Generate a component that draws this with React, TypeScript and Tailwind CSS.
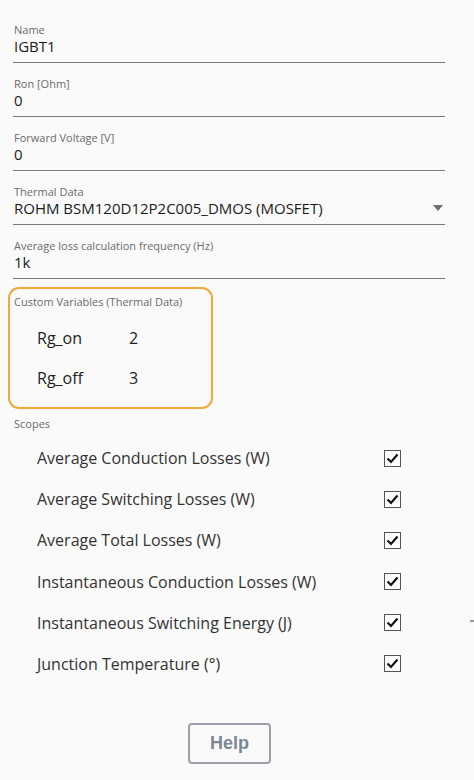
import React from "react";

const font = { fontFamily: '"Open Sans", "Noto Sans", sans-serif' };

function Field({ label, value, dropdown }: { label: string; value: string; dropdown?: boolean }) {
  return (
    <div className="ml-[13px] w-[432px] border-b border-[#7a7a7a] pb-[7px]">
      <div className="text-[11px] leading-[14px] text-[#6b6b6b] pl-[1px]">{label}</div>
      <div className="flex items-center justify-between text-[15px] leading-[18px] text-[#1a1a1a] pl-[1px]">
        <span>{value}</span>
        {dropdown && (
          <svg width="10" height="6" viewBox="0 0 10 6" className="mr-[2px]">
            <path d="M0 0 L10 0 L5 6 Z" fill="#6e6e6e" />
          </svg>
        )}
      </div>
    </div>
  );
}

function Check() {
  return (
    <div className="w-[17px] h-[17px] border border-[#555] bg-white flex items-center justify-center">
      <svg width="13" height="11" viewBox="0 0 13 11">
        <path d="M1.5 5.5 L5 9 L11.5 1.5" fill="none" stroke="#111" strokeWidth="2.2" />
      </svg>
    </div>
  );
}

const scopes = [
  "Average Conduction Losses (W)",
  "Average Switching Losses (W)",
  "Average Total Losses (W)",
  "Instantaneous Conduction Losses (W)",
  "Instantaneous Switching Energy (J)",
  "Junction Temperature (°)",
];

export default function App() {
  return (
    <div className="relative w-[474px] h-[780px] bg-[#fafafa] overflow-hidden" style={font}>
      <div className="flex flex-col gap-[14px] pt-[23px]">
        <Field label="Name" value="IGBT1" />
        <Field label="Ron [Ohm]" value="0" />
        <Field label="Forward Voltage [V]" value="0" />
        <Field label="Thermal Data" value="ROHM BSM120D12P2C005_DMOS (MOSFET)" dropdown />
        <Field label="Average loss calculation frequency (Hz)" value="1k" />
      </div>
      <div className="ml-[8px] mt-[8px] w-[205px] h-[122px] border-2 border-[#f0a93a] rounded-[11px] pt-[6px] pl-[4px]">
        <div className="text-[11px] leading-[14px] text-[#6b6b6b]">Custom Variables (Thermal Data)</div>
        <div className="mt-[19px] flex flex-col gap-[19px] pl-[23px] text-[16px] leading-[21px] text-[#222]">
          <div className="flex"><span className="w-[92px]">Rg_on</span><span>2</span></div>
          <div className="flex"><span className="w-[92px]">Rg_off</span><span>3</span></div>
        </div>
      </div>
      <div className="ml-[14px] mt-[8px] text-[11px] leading-[14px] text-[#6b6b6b]">Scopes</div>
      <div className="mt-[17px] flex flex-col gap-[21.2px]">
        {scopes.map((s) => (
          <div key={s} className="flex items-center h-[20px]">
            <span className="pl-[37px] w-[384px] text-[16px] leading-[20px] text-[#333]">{s}</span>
            <Check />
          </div>
        ))}
      </div>
      <div className="mt-[49px] ml-[188px]">
        <button
          className="w-[83px] h-[41px] border-2 border-[#9aa1a8] rounded-[4px] bg-[#fafafa] text-[18px] font-bold text-[#7a8794]"
          style={{ fontFamily: '"Liberation Sans", Arial, sans-serif' }}
        >
          Help
        </button>
      </div>
      <div className="absolute left-[470px] top-[620px] w-[4px] h-[2px] bg-[#999]" />
    </div>
  );
}
